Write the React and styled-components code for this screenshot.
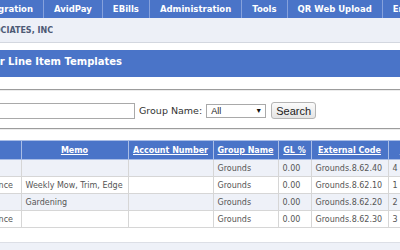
import React from 'react'
import styled, { createGlobalStyle } from 'styled-components'

const GlobalStyle = createGlobalStyle`
  html, body { margin: 0; padding: 0; background: #fff; }
  body { font-family: "DejaVu Sans", Verdana, sans-serif; }
`

const Page = styled.div`
  width: 400px;
  height: 250px;
  overflow: hidden;
  display: flex;
  flex-direction: column;
`

// clips the start of a run of text, as when the page is scrolled sideways
const Clip = styled.span`
  display: flex;
  justify-content: flex-end;
  overflow: hidden;
  white-space: nowrap;
  flex-shrink: 0;
  width: ${p => p.$w}px;
`

const NavBar = styled.nav`
  display: flex;
  height: 18px;
  flex-shrink: 0;
  background: #4a74c8;
`

const NavItem = styled.div`
  box-sizing: border-box;
  display: flex;
  align-items: center;
  justify-content: ${p => (p.$clip ? 'flex-end' : 'flex-start')};
  ${p => p.$clip && `width: ${p.$clip}px; overflow: hidden;`}
  flex-shrink: 0;
  padding: 0 10px;
  border-right: 1px solid #86a1dc;
  color: #fff;
  font-size: 8.5px;
  font-weight: bold;
  white-space: nowrap;
`

const CompanyBar = styled.div`
  display: flex;
  align-items: center;
  height: 24px;
  flex-shrink: 0;
  background: #edf0f7;
  border-bottom: 1px solid #d3d7df;
  color: #4d5a75;
  font-size: 8px;
  font-weight: bold;
`

const TitleBar = styled.div`
  display: flex;
  align-items: center;
  height: 27px;
  flex-shrink: 0;
  margin-top: 7px;
  padding-bottom: 4px;
  box-sizing: border-box;
  background: #4a74c8;
  color: #fff;
  font-size: 10px;
  font-weight: bold;
`

const Rule = styled.hr`
  flex-shrink: 0;
  margin: ${p => p.$top}px 0 0;
  height: 0;
  border: 0;
  border-top: 1px solid #9c9c9c;
  border-bottom: 1px solid #ececec;
`

const SearchRow = styled.div`
  display: flex;
  align-items: center;
  flex-shrink: 0;
  margin-top: 11px;
  height: 17px;
  color: #333;
  font-size: 9.5px;
`

const TextInput = styled.div`
  box-sizing: border-box;
  width: 160px;
  height: 16px;
  border: 1px solid #a9a9a9;
  background: #fff;
  flex-shrink: 0;
`

const Label = styled.span`
  margin: 0 4px 0 4px;
  white-space: nowrap;
`

const SelectBox = styled.div`
  box-sizing: border-box;
  display: flex;
  align-items: center;
  justify-content: space-between;
  width: 60px;
  height: 14px;
  padding: 0 3px 0 4px;
  border: 1px solid #a9a9a9;
  background: #fff;
  font-family: "Liberation Sans", Arial, sans-serif;
  font-size: 9px;
  color: #222;
`

const Arrow = styled.span`
  font-size: 7px;
  color: #111;
`

const Button = styled.button`
  box-sizing: border-box;
  margin-left: 5px;
  height: 17px;
  width: 45px;
  padding: 0;
  border: 1px solid #b4b4b4;
  border-radius: 3px;
  background: linear-gradient(#fbfbfb, #e4e4e4);
  color: #222;
  font-family: "Liberation Sans", Arial, sans-serif;
  font-size: 11px;
`

const TableWrap = styled.div`
  flex-shrink: 0;
  margin-top: 10px;
  overflow: hidden;
`

const Table = styled.table`
  border-collapse: collapse;
  table-layout: fixed;
  width: 440px;
  font-size: 8px;
`

const Col = styled.col`
  width: ${p => p.$w}px;
`

const Th = styled.th`
  height: 18px;
  padding: 0 3px;
  background: #4a74c8;
  border: 1px solid #a9bde6;
  ${p => p.$first && 'border-left: none;'}
  color: #fff;
  font-weight: bold;
  text-decoration: underline;
  text-align: center;
  white-space: nowrap;
  overflow: hidden;
`

const Row = styled.tr`
  background: ${p => (p.$alt ? '#eef1f8' : '#fff')};
`

const Td = styled.td`
  height: 16px;
  padding: 0 4px;
  border: 1px solid #d6d6d6;
  ${p => p.$first && 'border-left: none; padding: 0 8px 0 0;'}
  color: #555;
  white-space: nowrap;
  overflow: hidden;
`

const Footer = styled.div`
  flex: 1;
  margin-top: 14px;
  background: #eef1f8;
  border-top: 1px solid #dcdfe6;
`

const navItems = ['AvidPay', 'EBills', 'Administration', 'Tools', 'QR Web Upload', 'Enterprise']

const columns = [
  { label: 'Description', w: 21 },
  { label: 'Memo', w: 107 },
  { label: 'Account Number', w: 85 },
  { label: 'Group Name', w: 65 },
  { label: 'GL %', w: 33 },
  { label: 'External Code', w: 77 },
  { label: 'Line #', w: 52 },
]

const rows = [
  { desc: '', memo: '', code: 'Grounds.8.62.40', line: 4 },
  { desc: 'Maintenance', memo: 'Weekly Mow, Trim, Edge', code: 'Grounds.8.62.10', line: 1 },
  { desc: '', memo: 'Gardening', code: 'Grounds.8.62.20', line: 2 },
  { desc: 'Maintenance', memo: '', code: 'Grounds.8.62.30', line: 3 },
]

export default function App() {
  return (
    <>
      <GlobalStyle />
      <Page>
        <NavBar>
          <NavItem $clip={44}>Integration</NavItem>
          {navItems.map(item => (
            <NavItem key={item}>{item}</NavItem>
          ))}
        </NavBar>

        <CompanyBar>
          <Clip $w={53}>ASSOCIATES, INC</Clip>
        </CompanyBar>

        <TitleBar>
          <Clip $w={122}>Vendor Line Item Templates</Clip>
        </TitleBar>

        <Rule $top={12} />

        <SearchRow>
          <Clip $w={135}>
            <TextInput />
          </Clip>
          <Label>Group Name:</Label>
          <SelectBox>
            All <Arrow>▼</Arrow>
          </SelectBox>
          <Button>Search</Button>
        </SearchRow>

        <Rule $top={9} />

        <TableWrap>
          <Table>
            <colgroup>
              {columns.map(c => (
                <Col key={c.label} $w={c.w} />
              ))}
            </colgroup>
            <thead>
              <tr>
                {columns.map((c, i) => (
                  <Th key={c.label} $first={i === 0}>
                    {i === 0 ? '' : c.label}
                  </Th>
                ))}
              </tr>
            </thead>
            <tbody>
              {rows.map((r, i) => (
                <Row key={r.code} $alt={i % 2 === 0}>
                  <Td $first>
                    <Clip $w={13}>{r.desc}</Clip>
                  </Td>
                  <Td>{r.memo}</Td>
                  <Td></Td>
                  <Td>Grounds</Td>
                  <Td>0.00</Td>
                  <Td>{r.code}</Td>
                  <Td>{r.line}</Td>
                </Row>
              ))}
            </tbody>
          </Table>
        </TableWrap>

        <Footer />
      </Page>
    </>
  )
}
